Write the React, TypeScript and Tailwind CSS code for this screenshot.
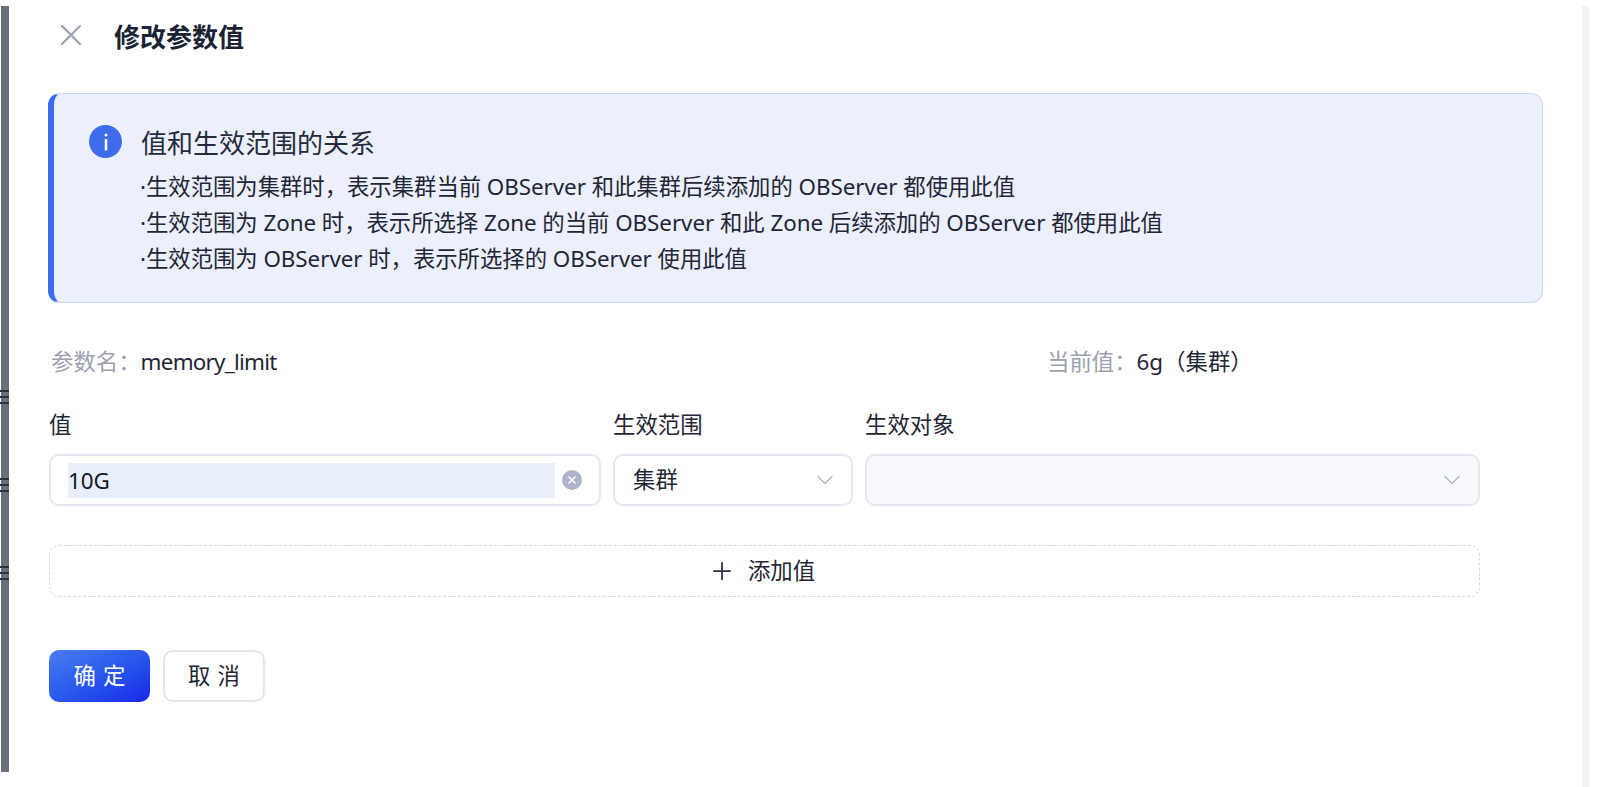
import { X, ChevronDown, Plus } from 'lucide-react';

const FONT = 'font-["Noto_Sans","Noto_Sans_CJK_SC",sans-serif]';

// full-width punctuation
const COMMA = '\uFF0C';
const COLON = '\uFF1A';
const LP = '\uFF08';
const RP = '\uFF09';

const Handle = () => (
  <div className="flex flex-col gap-[4px] items-end mb-[74px]">
    <span className="block h-[2px] w-[9px] bg-[#2c3242]" />
    <span className="block h-[2px] w-[9px] bg-[#2c3242]" />
    <span className="block h-[2px] w-[9px] bg-[#2c3242]" />
  </div>
);

const SelectBox = ({ value, disabled, className }: { value?: string; disabled?: boolean; className: string }) => (
  <div
    className={`flex items-center justify-between h-[52px] rounded-[10px] border-2 border-[#e4e8f1] pl-[18px] pr-[12px] ${
      disabled ? 'bg-[#f8f9fd]' : 'bg-white'
    } ${className}`}
  >
    <span>{value}</span>
    <ChevronDown className="w-[28px] h-[28px] text-[#aeb6c8]" strokeWidth={1.1} />
  </div>
);

const App = () => {
  return (
    <div className={`${FONT} h-[787px] w-full overflow-hidden bg-white text-[22.4px] text-[#1f2636] flex`}>
      <div className="ml-[1px] mt-[6px] h-[766px] w-[8px] bg-[#696e7c] flex flex-col justify-start pt-[384px]">
        <Handle />
        <Handle />
        <Handle />
      </div>

      <div className="ml-[39px] w-[1495px]">
        <div className="flex items-center h-[72px] pb-[1px]">
          <X className="ml-[5px] -mt-[1px] w-[36px] h-[36px] text-[#99a0b0]" strokeWidth={1.4} />
          <h1 className="ml-[25px] pt-[3px] text-[26px] font-bold text-[#1a2333]">修改参数值</h1>
        </div>

        <div className="mt-[21px] h-[210px] rounded-[12px] border border-[#c5d4f9] border-l-[6px] border-l-[#3b6bef] bg-[#ecf0fc] flex">
          <div className="ml-[35px] mt-[31px] w-[33px] h-[33px] shrink-0 rounded-full bg-[#3f6cec] flex items-center justify-center">
            <svg width="6" height="18" viewBox="0 0 6 18">
              <rect x="1.5" y="0.5" width="3" height="3" rx="1.5" fill="#fff" />
              <rect x="1.75" y="6" width="2.5" height="11.5" rx="0.5" fill="#fff" />
            </svg>
          </div>
          <div className="ml-[19px] mt-[30px]">
            <div className="text-[26px] leading-[38px] text-[#242b3b]">值和生效范围的关系</div>
            <div className="mt-[7px] leading-[36px] -ml-[1px] tracking-[-0.05px]">
              <div>{`·生效范围为集群时${COMMA}表示集群当前 OBServer 和此集群后续添加的 OBServer 都使用此值`}</div>
              <div>{`·生效范围为 Zone 时${COMMA}表示所选择 Zone 的当前 OBServer 和此 Zone 后续添加的 OBServer 都使用此值`}</div>
              <div>{`·生效范围为 OBServer 时${COMMA}表示所选择的 OBServer 使用此值`}</div>
            </div>
          </div>
        </div>

        <div className="mt-[41px] flex h-[36px] items-center pl-[3px]">
          <div className="w-[996px] flex">
            <span className="text-[#99a1b2]">{`参数名${COLON}`}</span>
            <span className="tracking-[-0.75px]">memory_limit</span>
          </div>
          <div className="flex">
            <span className="text-[#99a1b2]">{`当前值${COLON}`}</span>
            <span>{`6g${LP}集群${RP}`}</span>
          </div>
        </div>

        <div className="mt-[27px] flex w-[1432px] pl-[1px] gap-[12px]">
          <div className="w-[552px]">
            <div className="h-[36px] leading-[36px]">值</div>
            <div className="mt-[11px] h-[52px] rounded-[10px] border-2 border-[#e4e8f1] bg-white flex items-center pl-[17px] pr-[17px]">
              <span className="h-[35px] w-[490px] bg-[#e9eefb] leading-[35px] text-[#111827]">10G</span>
              <span className="ml-[7px] w-[20px] h-[20px] rounded-full bg-[#adb4c6] flex items-center justify-center">
                <X className="w-[12px] h-[12px] text-white" strokeWidth={3} />
              </span>
            </div>
          </div>
          <div className="w-[240px]">
            <div className="h-[36px] leading-[36px]">生效范围</div>
            <SelectBox value="集群" className="mt-[11px]" />
          </div>
          <div className="flex-1">
            <div className="h-[36px] leading-[36px]">生效对象</div>
            <SelectBox disabled className="mt-[11px]" />
          </div>
        </div>

        <div className="ml-[1px] mt-[39px] h-[52px] w-[1431px] rounded-[10px] border border-dashed border-[#cfd8e8] flex items-center justify-center gap-[12px] pr-[6px]">
          <Plus className="w-[28px] h-[28px] text-[#2a3142]" strokeWidth={1.5} />
          <span>添加值</span>
        </div>

        <div className="ml-[1px] mt-[53px] flex gap-[13px]">
          <button className="h-[52px] w-[101px] rounded-[10px] bg-gradient-to-br from-[#4a7cf0] to-[#1a22e8] text-white tracking-[7px] pl-[7px]">
            确定
          </button>
          <button className="h-[52px] w-[102px] rounded-[10px] border-2 border-[#e1e5f0] bg-white tracking-[7px] pl-[7px]">
            取消
          </button>
        </div>
      </div>

      <div className="ml-[39px] mt-[6px] h-[781px] w-[7px] bg-[#f3f3f4]" />
    </div>
  );
};

export default App;
